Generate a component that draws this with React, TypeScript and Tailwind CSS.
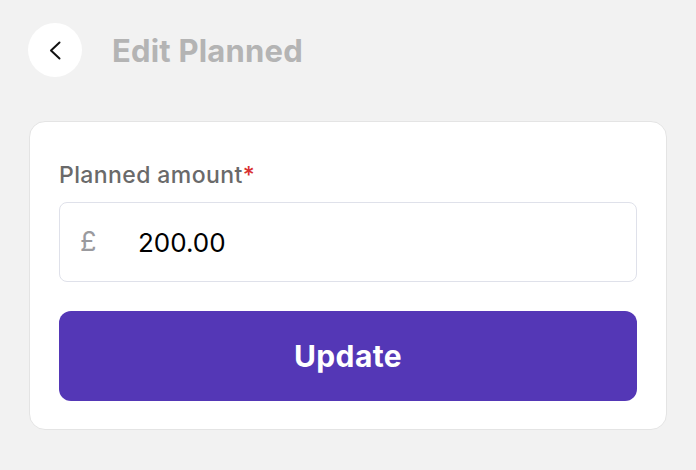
const App = () => {
  return (
    <div className="min-h-[470px] w-[696px] bg-[#f2f2f2] pt-[23px] font-['Inter',sans-serif]">
      {/* Header */}
      <div className="flex items-center pl-[28px]">
        <button className="flex h-[54px] w-[54px] items-center justify-center rounded-full bg-white">
          <svg width="14" height="19" viewBox="0 0 14 19" fill="none" className="ml-[-1px]">
            <path d="M11.5 1.5L3 9.5L11.5 17.5" stroke="#111" strokeWidth="2" strokeLinecap="round" strokeLinejoin="round" />
          </svg>
        </button>
        <h1 className="ml-[30px] text-[31px] font-bold leading-none tracking-[0.2px] text-[#b4b4b4]">Edit Planned</h1>
      </div>

      {/* Form card */}
      <div className="ml-[29px] mr-[29px] mt-[44px] rounded-[16px] border border-[#e4e4e4] bg-white px-[29px] pb-[28px] pt-[38px]">
        <label className="block text-[23px] font-medium leading-[30px] tracking-[0.4px] text-[#6a6a6a]">
          Planned amount<span className="text-[#d93030]">*</span>
        </label>
        <div className="mt-[12px] flex h-[80px] items-center rounded-[8px] border border-[#dfe1ea] px-[20px]">
          <span className="w-[58px] text-[27px] text-[#9a9a9e]">£</span>
          <span className="text-[26px] text-black">200.00</span>
        </div>
        <button className="mt-[29px] flex h-[90px] w-full items-center justify-center rounded-[12px] bg-[#5437b6] text-[30px] font-bold tracking-[0.4px] text-white">
          Update
        </button>
      </div>
    </div>
  );
};

export default App;
